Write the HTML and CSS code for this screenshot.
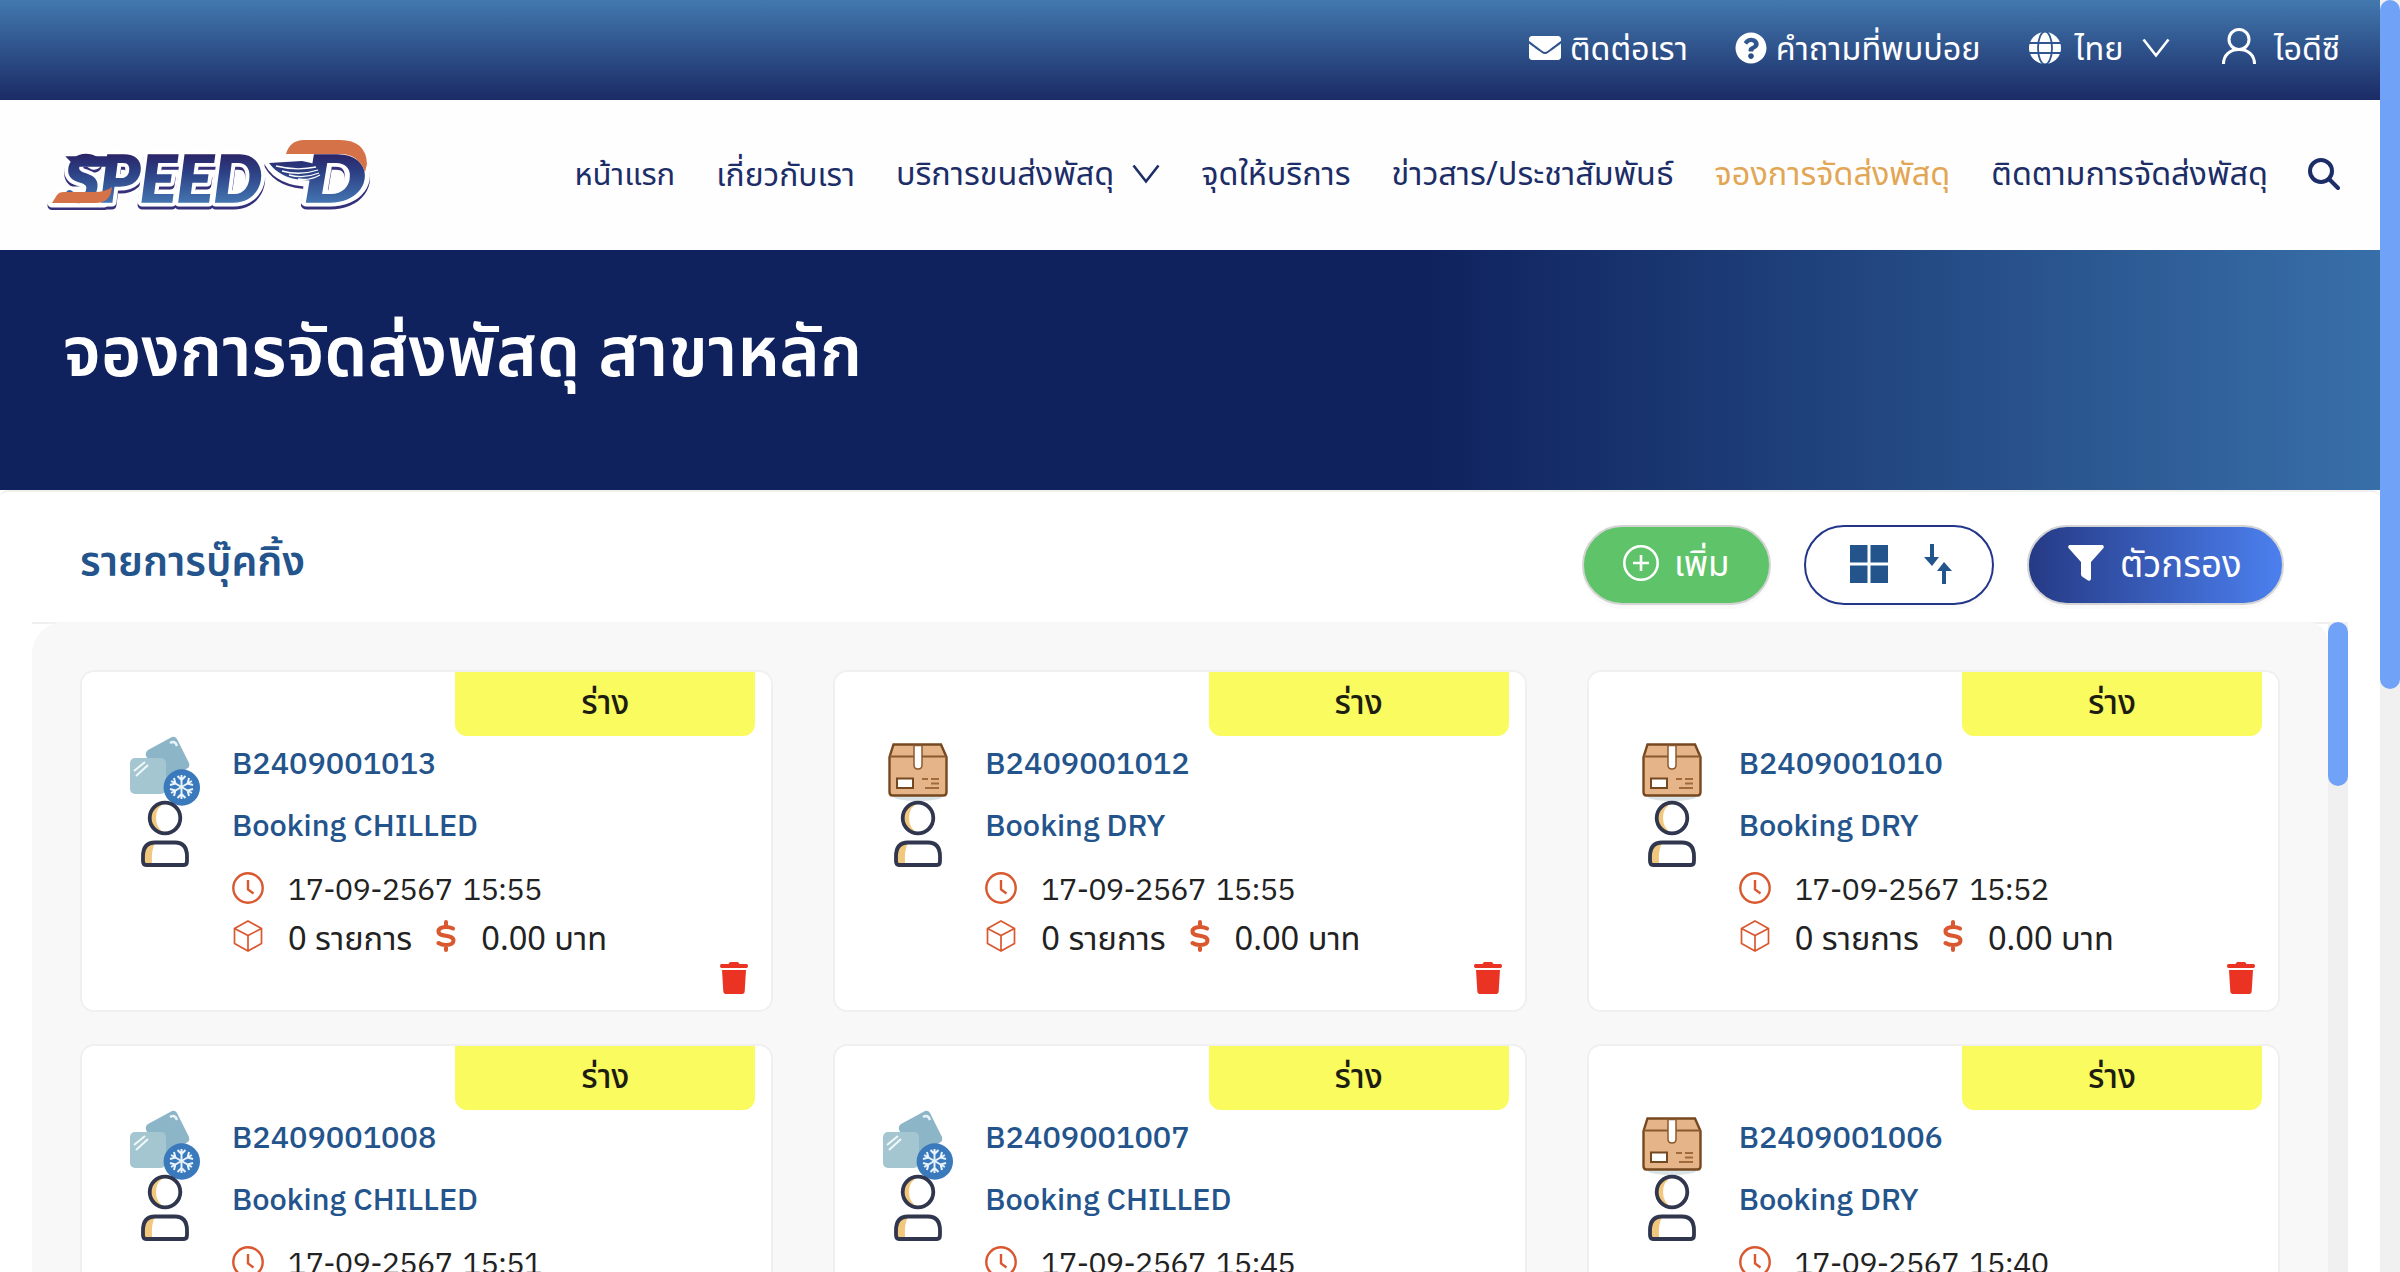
FILE: index.html
```html
<!DOCTYPE html>
<html lang="th">
<head>
<meta charset="utf-8">
<title>SPEED-D</title>
<link rel="stylesheet" href="styles.css">
</head>
<body>
<svg class="sprite" aria-hidden="true">
  <symbol id="chevron" viewBox="0 0 28 20"><path d="M1.500 1.500 14 17.500 26.500 1.500" fill="none" stroke="currentColor" stroke-width="2.600"/></symbol>
  <symbol id="chilled" viewBox="0 0 70 70">
    <path d="M18 14 42 1q3-1 5 2L59 27q1 3-1 5L36 43q-5 2-8-3L16 20q-1-4 2-6Z" fill="#8db5c8"/>
    <path d="M40 7q5-3 7 3" fill="none" stroke="#e8f3f7" stroke-width="2.500"/>
    <rect x="0" y="22" width="36" height="36" rx="5" fill="#a3c6d0"/>
    <path d="M4 35 15 26M6 40 18 29" stroke="#f2f8fa" stroke-width="2"/>
    <circle cx="51.800" cy="51.500" r="18.200" fill="#3a79bb"/>
    <g fill="none" stroke="#eaf4fb" stroke-width="2">
      <g id="arm"><path d="M51.500 39V63M47.500 40l4 4 4-4M47.500 62l4-4 4 4"/></g>
      <use href="#arm" transform="rotate(60 51.500 51)"/><use href="#arm" transform="rotate(120 51.500 51)"/>
    </g>
  </symbol>
  <symbol id="parcel" viewBox="0 0 70 70">
    <ellipse cx="35" cy="61" rx="24" ry="4" fill="#d9e3e6"/>
    <path d="M6.500 21 10.500 8.500H58L63.500 21V56q0 3.500-3 3.500H9.500q-3 0-3-3.500Z" fill="#e5b488" stroke="#76481f" stroke-width="2.400"/>
    <path d="M6.500 20.500H63.500" stroke="#8a5a2e" stroke-width="2"/>
    <path d="M31 9.500h8V29q0 4-4 4t-4-4Z" fill="#fff" stroke="#8a5a2e" stroke-width="1.500"/>
    <rect x="14" y="42.500" width="16" height="9.500" fill="#fff" stroke="#76481f" stroke-width="2"/>
    <path d="M39 43h6M48 43h8M48 47.500h8M42 52h14" stroke="#a06a3a" stroke-width="2"/>
  </symbol>
  <symbol id="person" viewBox="0 0 50 68">
    <path d="M25 3a15 15 0 0 0 0 30q-9-4-9-15t9-15ZM12 43q-9 2-9 12v9h9q-1-14 3-21Z" fill="#f0c77c"/>
    <circle cx="25" cy="18" r="15.300" fill="none" stroke="#30364d" stroke-width="3.800"/>
    <path d="M15 42.500H35q12 0 12 14V61q0 4-3 4H6q-3 0-3-4V56.500q0-14 12-14Z" fill="none" stroke="#30364d" stroke-width="3.800"/>
  </symbol>
  <symbol id="clock" viewBox="0 0 32 32"><g fill="none" stroke="currentColor" stroke-width="2.400"><circle cx="16" cy="16" r="14.700"/><path d="M16 8V17.500L21.500 21.500"/></g></symbol>
  <symbol id="cube" viewBox="0 0 32 32"><path d="M16 1 29.500 8.500V23.500L16 31 2.500 23.500V8.500ZM2.500 8.500 16 15.500 29.500 8.500M16 15.500V31" fill="none" stroke="currentColor" stroke-width="1.700"/></symbol>
  <symbol id="dollar" viewBox="0 0 20 32"><path d="M17 8.500Q14 7 10 7C5.500 7 2.500 8.500 2.500 11.500 2.500 18 17.500 13.500 17.500 20.500 17.500 24 14.500 25 10 25Q5.500 25 2.500 23M10 2V6.500M10 25.500V30" fill="none" stroke="currentColor" stroke-width="4" stroke-linecap="round"/></symbol>
  <symbol id="trash" viewBox="0 0 28 32"><path d="M1.500 2H8.500L9.300.8Q9.800 0 10.800 0H17.200Q18.200 0 18.700.8L19.500 2H26.500Q28 2 28 4T26.500 6H1.500Q0 6 0 4T1.500 2ZM2 8H26L24.700 29.200Q24.500 32 21.700 32H6.300Q3.500 32 3.300 29.200Z" fill="currentColor"/></symbol>
</svg>

<div class="page">
  <div class="site">
    <div class="topbar">
      <a class="top-link">
        <svg class="i32" viewBox="0 0 512 512" fill="currentColor"><path d="M502.300 190.800c3.900-3.100 9.700-.2 9.700 4.700V400c0 26.500-21.500 48-48 48H48c-26.500 0-48-21.500-48-48V195.600c0-5 5.700-7.800 9.700-4.700 22.400 17.400 52.100 39.500 154.100 113.600 21.100 15.400 56.700 47.800 92.200 47.600 35.700.3 72-32.800 92.300-47.600 102-74.100 131.600-96.300 154-113.700zM256 320c23.200.4 56.600-29.200 73.400-41.400 132.700-96.300 142.800-104.700 173.400-128.700 5.800-4.500 9.200-11.500 9.200-18.900v-19c0-26.500-21.500-48-48-48H48c-26.500 0-48 21.500-48 48v19c0 7.400 3.400 14.300 9.200 18.900 30.600 23.900 40.700 32.400 173.400 128.700 16.800 12.200 50.200 41.800 73.400 41.400z"/></svg>
        <span>ติดต่อเรา</span>
      </a>
      <a class="top-link">
        <svg class="i32" viewBox="0 0 512 512" fill="currentColor"><path d="M504 256c0 137-111 248-248 248S8 393 8 256 119 8 256 8s248 111 248 248zM262.700 90c-54.500 0-89.300 23-116.500 63.800-3.500 5.300-2.400 12.400 2.700 16.300l34.700 26.300c5.200 3.900 12.600 3 16.700-2.100 17.900-22.700 30.100-35.800 57.300-35.800 20.400 0 45.700 13.100 45.700 33 0 15-12.400 22.700-32.500 34C247.100 238.500 216 254.900 216 296v4c0 6.600 5.400 12 12 12h56c6.600 0 12-5.400 12-12v-1.300c0-28.500 83.200-29.600 83.200-106.700 0-58-60.200-102-116.500-102zM256 338c-25.400 0-46 20.600-46 46s20.600 46 46 46 46-20.600 46-46-20.600-46-46-46z"/></svg>
        <span>คำถามที่พบบ่อย</span>
      </a>
      <a class="top-link lang">
        <svg class="i32" viewBox="0 0 32 32"><circle cx="16" cy="16" r="16" fill="#fff"/><g fill="none" stroke="#2f5690" stroke-width="1.800"><ellipse cx="16" cy="16" rx="7" ry="16.500"/><path d="M0 11H32M0 21H32"/></g></svg>
        <span>ไทย</span>
        <svg class="chev"><use href="#chevron"/></svg>
      </a>
      <a class="top-link user">
        <svg class="avatar" viewBox="0 0 34 36" fill="none" stroke="currentColor" stroke-width="3"><circle cx="17" cy="11.500" r="10"/><path d="M1.500 36C1.500 27 8 21.500 17 21.500S32.500 27 32.500 36"/></svg>
        <span>ไอดีซี</span>
      </a>
    </div>

    <header class="header">
      <svg class="logo" viewBox="0 0 340 110">
        <defs>
          <linearGradient id="ink" x1="0" y1="34" x2="0" y2="84" gradientUnits="userSpaceOnUse"><stop offset="0" stop-color="#2b2468"/><stop offset=".35" stop-color="#2c3f83"/><stop offset="1" stop-color="#4577b3"/></linearGradient>
        </defs>
        <g class="logo-shadow" transform="translate(0 2.500)">
          <text x="24" y="82" textLength="198" lengthAdjust="spacingAndGlyphs">SPEED</text>
          <text x="264" y="82" textLength="62" lengthAdjust="spacingAndGlyphs">D</text>
          <path d="M12 83 17 74Q19 71 24 71H62L64 83Z"/>
          <path d="M229 43 262 41Q280 44 282 54 278 62 270 62 240 62 229 43Z"/>
        </g>
        <g class="logo-edge">
          <text x="24" y="82" textLength="198" lengthAdjust="spacingAndGlyphs">SPEED</text>
          <text x="264" y="82" textLength="62" lengthAdjust="spacingAndGlyphs">D</text>
          <path d="M12 83 17 74Q19 71 24 71H62L64 83Z"/>
          <path d="M229 43 262 41Q280 44 282 54 278 62 270 62 240 62 229 43Z"/>
        </g>
        <g class="logo-face">
          <text x="24" y="82" textLength="198" lengthAdjust="spacingAndGlyphs">SPEED</text>
          <text x="264" y="82" textLength="62" lengthAdjust="spacingAndGlyphs">D</text>
          <path d="M27 37H72L70 46H38Q32 43 27 37Z"/>
        </g>
        <path d="M12 83 17 75Q19 72 24 72H54Q66 72 72 67 71 77 66 80 62 83 56 83Z" fill="#d57248"/>
        <path d="M246 34Q250 20 264 20H300Q326 20 327 44L325 52Q319 35 302 34Z" fill="#d57248"/>
        <path d="M229 43 262 41Q280 44 284 50 283 58 277 61L262 60Q240 58 229 43Z" fill="url(#ink)"/>
        <path d="M236 46Q256 51 276 47M242 51Q260 56 278 50M249 55Q264 59 279 53M258 59Q269 61 280 55" fill="none" stroke="#fff" stroke-width="1.300"/>
      </svg>
      <nav class="nav">
        <a class="tight">หน้าแรก</a>
        <a class="snug">เกี่ยวกับเรา</a>
        <a class="has-menu">บริการขนส่งพัสดุ <svg class="chev"><use href="#chevron"/></svg></a>
        <a>จุดให้บริการ</a>
        <a>ข่าวสาร/ประชาสัมพันธ์</a>
        <a class="active">จองการจัดส่งพัสดุ</a>
        <a>ติดตามการจัดส่งพัสดุ</a>
        <svg class="i32" viewBox="0 0 32 32" fill="none" stroke="currentColor" stroke-width="4"><circle cx="13" cy="13" r="11"/><path d="M21 21 30 30" stroke-linecap="round"/></svg>
      </nav>
    </header>

    <section class="hero"><h1>จองการจัดส่งพัสดุ สาขาหลัก</h1></section>

    <main class="board">
      <div class="board-head">
        <h2>รายการบุ๊คกิ้ง</h2>
        <div class="actions">
          <button class="btn add"><svg class="i36" viewBox="0 0 36 36" fill="none" stroke="currentColor" stroke-width="2.600"><circle cx="18" cy="18" r="16.700"/><path d="M18 10V26M10 18H26"/></svg><span>เพิ่ม</span></button>
          <div class="btn toggle">
            <svg class="tiles" viewBox="0 0 38 38" fill="currentColor"><path d="M0 0H17.500V17.500H0ZM20.500 0H38V17.500H20.500ZM0 20.500H17.500V38H0ZM20.500 20.500H38V38H20.500Z"/></svg>
            <svg class="sort" viewBox="0 0 28 40" fill="currentColor"><path d="M6 0H10V13H15L8 22 0 13H6ZM18 40H22V27H28L20 18 13 27H18Z"/></svg>
          </div>
          <button class="btn filter"><svg class="i36" viewBox="0 0 36 36" fill="currentColor"><path d="M1.500 0H34.500Q36.500 1 35.500 3L23 17V34Q22.500 36.500 20 35.500L14 31.500Q13 30.500 13 29V17L.5 3Q-.5 1 1.500 0Z"/></svg><span>ตัวกรอง</span></button>
        </div>
      </div>

      <div class="list">
        <div class="cards">
          <article class="card">
            <div class="badge">ร่าง</div>
            <div class="row">
              <div class="pics"><svg class="kind"><use href="#chilled"/></svg><svg class="who"><use href="#person"/></svg></div>
              <div class="info"><div class="title">B2409001013</div><div class="title">Booking CHILLED</div>
                <div class="line date"><svg><use href="#clock"/></svg><span>17-09-2567 15:55</span></div>
                <div class="line"><svg><use href="#cube"/></svg><span>0 รายการ</span><svg class="dollar"><use href="#dollar"/></svg><span>0.00 บาท</span></div></div>
            </div>
            <svg class="trash"><use href="#trash"/></svg>
          </article>
          <article class="card">
            <div class="badge">ร่าง</div>
            <div class="row">
              <div class="pics"><svg class="kind"><use href="#parcel"/></svg><svg class="who"><use href="#person"/></svg></div>
              <div class="info"><div class="title">B2409001012</div><div class="title">Booking DRY</div>
                <div class="line date"><svg><use href="#clock"/></svg><span>17-09-2567 15:55</span></div>
                <div class="line"><svg><use href="#cube"/></svg><span>0 รายการ</span><svg class="dollar"><use href="#dollar"/></svg><span>0.00 บาท</span></div></div>
            </div>
            <svg class="trash"><use href="#trash"/></svg>
          </article>
          <article class="card">
            <div class="badge">ร่าง</div>
            <div class="row">
              <div class="pics"><svg class="kind"><use href="#parcel"/></svg><svg class="who"><use href="#person"/></svg></div>
              <div class="info"><div class="title">B2409001010</div><div class="title">Booking DRY</div>
                <div class="line date"><svg><use href="#clock"/></svg><span>17-09-2567 15:52</span></div>
                <div class="line"><svg><use href="#cube"/></svg><span>0 รายการ</span><svg class="dollar"><use href="#dollar"/></svg><span>0.00 บาท</span></div></div>
            </div>
            <svg class="trash"><use href="#trash"/></svg>
          </article>
          <article class="card">
            <div class="badge">ร่าง</div>
            <div class="row">
              <div class="pics"><svg class="kind"><use href="#chilled"/></svg><svg class="who"><use href="#person"/></svg></div>
              <div class="info"><div class="title">B2409001008</div><div class="title">Booking CHILLED</div>
                <div class="line date"><svg><use href="#clock"/></svg><span>17-09-2567 15:51</span></div></div>
            </div>
          </article>
          <article class="card">
            <div class="badge">ร่าง</div>
            <div class="row">
              <div class="pics"><svg class="kind"><use href="#chilled"/></svg><svg class="who"><use href="#person"/></svg></div>
              <div class="info"><div class="title">B2409001007</div><div class="title">Booking CHILLED</div>
                <div class="line date"><svg><use href="#clock"/></svg><span>17-09-2567 15:45</span></div></div>
            </div>
          </article>
          <article class="card">
            <div class="badge">ร่าง</div>
            <div class="row">
              <div class="pics"><svg class="kind"><use href="#parcel"/></svg><svg class="who"><use href="#person"/></svg></div>
              <div class="info"><div class="title">B2409001006</div><div class="title">Booking DRY</div>
                <div class="line date"><svg><use href="#clock"/></svg><span>17-09-2567 15:40</span></div></div>
            </div>
          </article>
        </div>
        <div class="scrollbar inner"><div class="thumb"></div></div>
      </div>
    </main>
  </div>
  <div class="scrollbar outer"><div class="thumb"></div></div>
</div>
</body>
</html>
```
FILE: styles.css
```css
* { box-sizing: border-box; }
body {
  margin: 0;
  background: #fff;
  font-family: "Noto Sans Thai", "Noto Sans", sans-serif;
  font-size: 32.4px;
  color: #222;
}
svg { display: block; flex: none; }
h1, h2 { margin: 0; }
.sprite { position: absolute; width: 0; height: 0; }

.page { display: flex; width: 2400px; height: 1272px; overflow: hidden; }
.site { display: flex; flex-direction: column; width: 2380px; height: 100%; }
.i32 { width: 32px; height: 32px; }
.i36 { width: 36px; height: 36px; }
.chev { width: 28px; height: 20px; }

.scrollbar { width: 20px; background: #f0f0f0; flex: none; }
.thumb { background: #70a3f7; border-radius: 10px; }
.outer .thumb { height: 689px; }
.inner .thumb { height: 164px; }

.topbar {
  display: flex; justify-content: flex-end; align-items: center;
  height: 100px; padding: 0 40px 4px 0;
  background: linear-gradient(#4278ae, #1b2b66);
  color: #fff;
  line-height: 60px;
}
.top-link { display: flex; align-items: center; gap: 8.5px; margin-left: 47.5px; }
.top-link span { padding-top: 5px; }
.lang { gap: 14px; margin-left: 48px; }
.lang .chev { margin: 0 0 0 5px; }
.user { gap: 18px; margin-left: 51.5px; }
.user .avatar { width: 34px; height: 36px; margin-bottom: 4px; }

.header {
  display: flex; align-items: center; justify-content: space-between;
  height: 150px; padding: 0 40px; background: #fefefe; color: #1c2d68;
}
.logo { width: 340px; height: 110px; overflow: visible; }
.logo text { font-family: Lato, sans-serif; font-weight: 900; font-style: italic; font-size: 65px; }
.logo-shadow { fill: #35307a; stroke: #35307a; stroke-width: 9px; stroke-linejoin: round; }
.logo-edge { fill: #fff; stroke: #fff; stroke-width: 9px; stroke-linejoin: round; }
.logo-face { fill: url(#ink); stroke: url(#ink); stroke-width: 1.5px; }
.nav { display: flex; align-items: center; gap: 41px; line-height: 60px; white-space: nowrap; }
.nav a { padding-top: 1px; }
.nav > svg { margin-left: -1px; margin-bottom: 3px; }
.nav .active { color: #e2a654; }
.nav .tight { font-size: 31px; }
.nav .snug { font-size: 31.8px; }
.has-menu { display: flex; align-items: center; gap: 18px; }
.has-menu .chev { margin-bottom: 3px; }

.hero {
  height: 240px; padding-left: 63px;
  background: linear-gradient(90deg, #0f225e 0%, #0f225e 60%, #1e3f79 75%, #386fa8 100%);
}
.hero h1 { color: #fff; font-size: 69px; font-weight: 600; line-height: 100px; padding-top: 55px; }

.board {
  flex: 1; display: flex; flex-direction: column;
  border-top: 2px solid #f0f0f0; border-radius: 8px 8px 0 0;
  background: #fff;
  padding: 0 32px; min-height: 0;
}
.board-head {
  display: flex; justify-content: space-between; flex: none;
  height: 132px; padding: 33px 64px 0 48px; border-bottom: 2px solid #f0f0f0;
}
.board-head h2 { font-size: 40.8px; font-weight: 600; line-height: 78px; color: #24548c; }
.actions { display: flex; gap: 33px; }
.btn {
  display: flex; align-items: center; height: 80px; border-radius: 40px;
  border: 2px solid #d4d4d4; font: inherit; font-size: 36px; line-height: 60px; color: #fff;
  box-shadow: 0 4px 0 rgba(0, 0, 0, .02); padding: 0 0 4px;
}
.btn span { padding-top: 5px; }
.add { width: 189px; background: #5fc36a; padding-left: 39px; gap: 15px; }
.add span { font-size: 35px; }
.toggle { width: 190px; border-color: #22358a; color: #24548c; padding: 0 0 2px 44px; gap: 36px; }
.tiles { width: 38px; height: 38px; }
.sort { width: 28px; height: 40px; }
.filter { width: 257px; background: linear-gradient(90deg, #253a85, #4c80ef); padding-left: 39px; gap: 16px; }
.filter span { font-size: 36.6px; }

.list { display: flex; flex: 1; min-height: 0; margin-top: -2px; }
.cards {
  flex: 1; display: grid; grid-template-columns: repeat(3, 1fr); grid-auto-rows: 341.5px;
  gap: 32px 60px; padding: 48px; overflow: hidden;
  background: #f8f8f8; border-radius: 32px 20px 0 0;
}
.card {
  position: relative; display: flex; flex-direction: column;
  border: 2px solid #f0f0f0; border-radius: 14px; background: #fff;
}
.badge {
  align-self: flex-end; width: 300px; height: 64px; margin-right: 16px;
  border-radius: 0 0 12px 12px; background: #f9fb5e; color: #1d1d12;
  font-size: 33px; font-weight: 500; line-height: 64px; text-align: center;
}
.row { display: flex; }
.pics { display: flex; flex-direction: column; align-items: center; width: 70px; margin: 0 32px 0 48px; }
.kind { width: 70px; height: 70px; }
.who { width: 50px; height: 68px; margin-top: -6px; }
.info { margin-top: -2px; }
.title {
  font-family: "IBM Plex Sans Thai", "Noto Sans", sans-serif;
  font-size: 30.7px; font-weight: 500; line-height: 62px; color: #24548c;
}
.line { display: flex; align-items: center; height: 48px; line-height: 48px; }
.line svg { width: 32px; height: 32px; color: #d9582f; margin-right: 24px; }
.line .dollar { width: 20px; margin: 0 25px 0 24px; }
.line span { padding-top: 7px; font-size: 32.6px; }
.date { margin-top: 6px; }
.line.date span { font-family: "IBM Plex Sans Thai", "Noto Sans", sans-serif; font-size: 30.7px; letter-spacing: -.75px; word-spacing: 4px; padding-top: 6px; }
.trash { position: absolute; right: 23px; bottom: 16px; width: 28px; height: 32px; color: #ea3323; }
```
